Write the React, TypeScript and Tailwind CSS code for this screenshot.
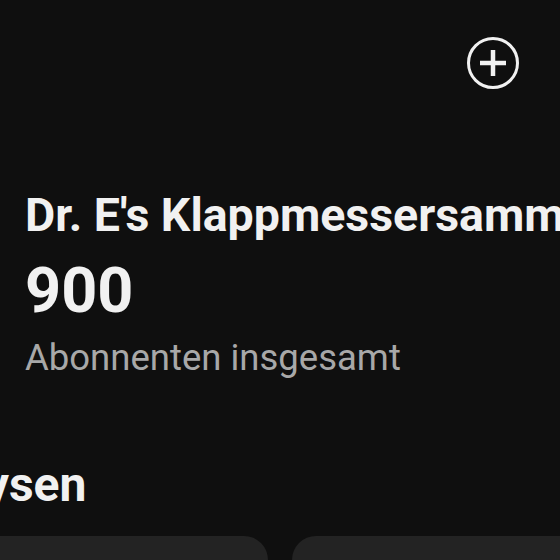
import React from 'react';

const PlusCircle = () => (
  <svg width="52" height="52" viewBox="0 0 52 52" fill="none">
    <circle cx="26" cy="26" r="24.5" stroke="#f1f1f1" strokeWidth="3" />
    <path d="M26 13v26M13 26h26" stroke="#f1f1f1" strokeWidth="4.5" />
  </svg>
);

export default function App() {
  return (
    <div className="w-[560px] h-[560px] overflow-hidden bg-[#0f0f0f] text-[#f1f1f1] font-['Roboto',sans-serif]">
      <div className="flex justify-end pt-[37px] pr-[41px]">
        <button className="block">
          <PlusCircle />
        </button>
      </div>

      <div className="pl-[25px] mt-[98px]">
        <h1 className="text-[46.5px] leading-[56px] font-bold whitespace-nowrap">
          Dr. E's Klappmessersammlung
        </h1>
        <div className="mt-[10px] text-[63px] leading-[76px] font-bold">900</div>
        <div className="mt-[7px] text-[36.5px] leading-[44px] text-[#a8a8a8]">
          Abonnenten insgesamt
        </div>
      </div>

      <div className="-ml-[112px] mt-[76px]">
        <h2 className="text-[48px] leading-[58px] font-bold whitespace-nowrap">Analysen</h2>
        <div className="mt-[22px] flex gap-[24px]">
          <div className="w-[380px] h-[120px] shrink-0 rounded-[24px] bg-[#232323]" />
          <div className="w-[380px] h-[120px] shrink-0 rounded-[24px] bg-[#232323]" />
        </div>
      </div>
    </div>
  );
}
